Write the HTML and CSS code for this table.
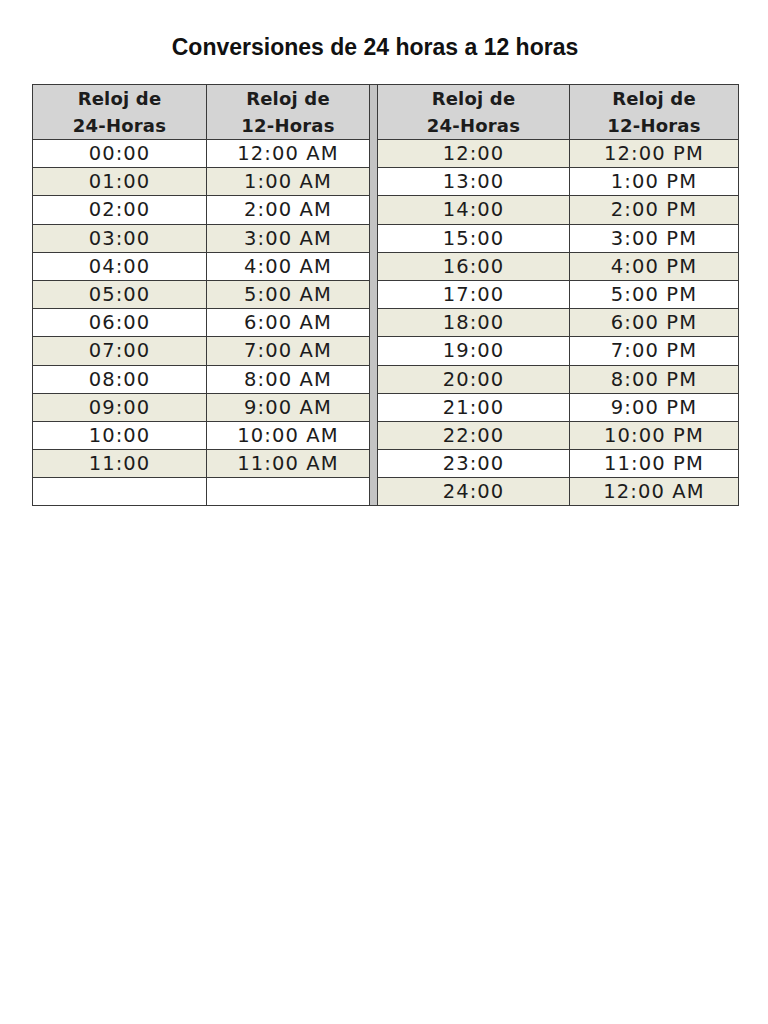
FILE: index.html
```html
<!DOCTYPE html>
<html lang="es">
<head>
<meta charset="utf-8">
<title>Conversiones de 24 horas a 12 horas</title>
<link rel="stylesheet" href="styles.css">
</head>
<body>
<h1 class="title">Conversiones de 24 horas a 12 horas</h1>
<table class="conv">
  <colgroup>
    <col class="c1"><col class="c2"><col class="cdiv"><col class="c3"><col class="c4">
  </colgroup>
  <tbody>
    <tr class="head">
      <th>Reloj de<br>24-Horas</th>
      <th>Reloj de<br>12-Horas</th>
      <td class="divider" rowspan="14"></td>
      <th>Reloj de<br>24-Horas</th>
      <th>Reloj de<br>12-Horas</th>
    </tr>
    <tr><td>00:00</td><td>12:00 AM</td><td class="alt">12:00</td><td class="alt">12:00 PM</td></tr>
    <tr><td class="alt">01:00</td><td class="alt">1:00 AM</td><td>13:00</td><td>1:00 PM</td></tr>
    <tr><td>02:00</td><td>2:00 AM</td><td class="alt">14:00</td><td class="alt">2:00 PM</td></tr>
    <tr><td class="alt">03:00</td><td class="alt">3:00 AM</td><td>15:00</td><td>3:00 PM</td></tr>
    <tr><td>04:00</td><td>4:00 AM</td><td class="alt">16:00</td><td class="alt">4:00 PM</td></tr>
    <tr><td class="alt">05:00</td><td class="alt">5:00 AM</td><td>17:00</td><td>5:00 PM</td></tr>
    <tr><td>06:00</td><td>6:00 AM</td><td class="alt">18:00</td><td class="alt">6:00 PM</td></tr>
    <tr><td class="alt">07:00</td><td class="alt">7:00 AM</td><td>19:00</td><td>7:00 PM</td></tr>
    <tr><td>08:00</td><td>8:00 AM</td><td class="alt">20:00</td><td class="alt">8:00 PM</td></tr>
    <tr><td class="alt">09:00</td><td class="alt">9:00 AM</td><td>21:00</td><td>9:00 PM</td></tr>
    <tr><td>10:00</td><td>10:00 AM</td><td class="alt">22:00</td><td class="alt">10:00 PM</td></tr>
    <tr><td class="alt">11:00</td><td class="alt">11:00 AM</td><td>23:00</td><td>11:00 PM</td></tr>
    <tr><td></td><td></td><td class="alt">24:00</td><td class="alt">12:00 AM</td></tr>
  </tbody>
</table>
</body>
</html>
```
FILE: styles.css
```css
html, body {
  margin: 0;
  padding: 0;
  background: #ffffff;
}
body {
  padding: 33px 0 0 32px;
}
.title {
  margin: 0;
  width: 706px;
  text-align: center;
  font-family: "Liberation Sans", Arial, sans-serif;
  font-weight: bold;
  font-size: 23px;
  line-height: 28px;
  color: #111;
  padding-right: 20px;
  box-sizing: border-box;
}
.conv {
  margin-top: 23px;
  border-collapse: collapse;
  table-layout: fixed;
  width: 706px;
  font-family: "DejaVu Sans", sans-serif;
  color: #1c1c1c;
}
.c1 { width: 174px; }
.c2 { width: 163px; }
.cdiv { width: 8px; }
.c3 { width: 192px; }
.c4 { width: 169px; }
.conv th, .conv td {
  border: 1px solid #3a3a3a;
  padding: 0;
  text-align: center;
  vertical-align: middle;
}
.conv th {
  background: #d4d4d4;
  font-family: "DejaVu Sans", sans-serif;
  font-weight: bold;
  font-size: 18px;
  line-height: 27px;
  height: 54px;
  letter-spacing: 0.2px;
}
.conv td {
  height: 27.2px;
  font-size: 19.5px;
  line-height: 27px;
  letter-spacing: 1.1px;
}
.conv td.alt {
  background: #ecebdd;
}
.conv td.divider {
  background: #c4c4c4;
  border-left: 1px solid #3a3a3a;
  border-right: 1px solid #3a3a3a;
}
```
